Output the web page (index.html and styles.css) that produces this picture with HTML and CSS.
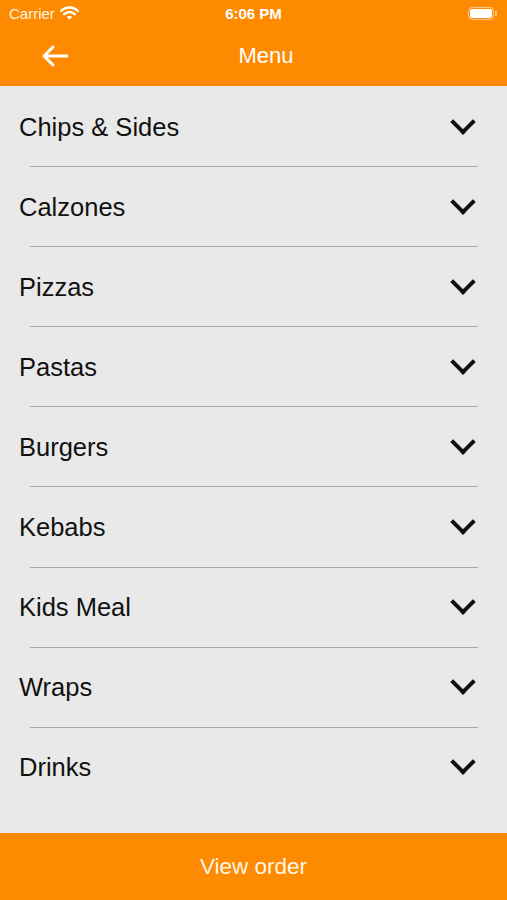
FILE: index.html
```html
<!DOCTYPE html>
<html lang="en">
<head>
    <meta charset="UTF-8">
    <meta name="viewport" content="width=device-width, initial-scale=1.0">
    <title>Menu</title>
    <link rel="stylesheet" href="styles.css">
</head>
<body>
    <div class="app">
        <header class="top-bar">
            <div class="status-bar">
                <div class="carrier">
                    Carrier
                    <svg class="wifi" width="19" height="14" viewBox="0 0 19 14">
                        <path d="M1 5 A12 12 0 0 1 18 5" fill="none" stroke="#fff" stroke-width="2.4" stroke-linecap="round"/>
                        <path d="M4.2 8.2 A7.5 7.5 0 0 1 14.8 8.2" fill="none" stroke="#fff" stroke-width="2.4" stroke-linecap="round"/>
                        <path d="M6.8 11 L9.5 13.6 L12.2 11 A3.8 3.8 0 0 0 6.8 11 Z" fill="#fff"/>
                    </svg>
                </div>
                <div class="clock">6:06 PM</div>
                <div class="battery">
                    <span class="battery-body"><span class="battery-level"></span></span>
                    <span class="battery-tip"></span>
                </div>
            </div>
            <div class="nav-bar">
                <button class="back-button" aria-label="Back">
                    <svg width="28" height="22" viewBox="0 0 28 22">
                        <path d="M26 11 H3 M12 2 L3 11 L12 20" fill="none" stroke="#fff" stroke-width="3" stroke-linecap="round" stroke-linejoin="round"/>
                    </svg>
                </button>
                <h1 class="nav-title">Menu</h1>
            </div>
        </header>

        <ul class="category-list">
            <li class="category">Chips &amp; Sides<span class="chevron"></span></li>
            <li class="category">Calzones<span class="chevron"></span></li>
            <li class="category">Pizzas<span class="chevron"></span></li>
            <li class="category">Pastas<span class="chevron"></span></li>
            <li class="category">Burgers<span class="chevron"></span></li>
            <li class="category">Kebabs<span class="chevron"></span></li>
            <li class="category">Kids Meal<span class="chevron"></span></li>
            <li class="category">Wraps<span class="chevron"></span></li>
            <li class="category last">Drinks<span class="chevron"></span></li>
        </ul>

        <button class="view-order">View order</button>
    </div>
</body>
</html>
```

FILE: styles.css
```css
body {
    margin: 0;
    font-family: "Liberation Sans", Arial, sans-serif;
    background-color: #e9e9e9;
}
.app {
    height: 900px;
    display: flex;
    flex-direction: column;
}
.top-bar {
    background-color: #fd8a00;
    color: white;
}
.status-bar {
    height: 27px;
    display: flex;
    align-items: center;
    justify-content: space-between;
    padding: 0 9px;
    font-size: 15px;
    position: relative;
}
.carrier {
    display: flex;
    align-items: center;
    gap: 5px;
    color: #fff3e0;
}
.wifi {
    margin-top: -2px;
}
.clock {
    position: absolute;
    left: 0;
    right: 0;
    text-align: center;
    font-weight: bold;
    font-size: 15px;
}
.battery {
    display: flex;
    align-items: center;
    margin-right: 1px;
}
.battery-body {
    width: 22px;
    height: 9px;
    border: 1.5px solid rgba(255, 255, 255, 0.55);
    border-radius: 4px;
    padding: 1px;
    display: flex;
}
.battery-level {
    flex: 1;
    background-color: white;
    border-radius: 2px;
}
.battery-tip {
    width: 2px;
    height: 5px;
    margin-left: 1px;
    background-color: rgba(255, 255, 255, 0.55);
    border-radius: 0 1px 1px 0;
}
.nav-bar {
    height: 59px;
    display: flex;
    align-items: center;
    justify-content: center;
    padding-left: 25px;
    position: relative;
}
.back-button {
    position: absolute;
    left: 41px;
    top: 18px;
    background: none;
    border: none;
    padding: 0;
    line-height: 0;
    cursor: pointer;
}
.nav-title {
    margin: 0 0 2px;
    font-size: 22px;
    font-weight: normal;
}
.category-list {
    list-style: none;
    margin: 0;
    padding: 1px 0 0;
    flex: 1;
}
.category {
    height: 80.1px;
    display: flex;
    align-items: center;
    justify-content: space-between;
    padding: 0 35px 0 19px;
    font-size: 25.5px;
    color: #111;
    position: relative;
}
.category::after {
    content: "";
    position: absolute;
    left: 30px;
    right: 29px;
    bottom: 0;
    border-bottom: 1px solid #a8a8a8;
}
.category.last::after {
    display: none;
}
.chevron {
    width: 14px;
    height: 14px;
    border-right: 4px solid #111;
    border-bottom: 4px solid #111;
    transform: rotate(45deg);
    margin-top: -11px;
}
.view-order {
    height: 67px;
    border: none;
    background-color: #fd8a00;
    color: #fff6e6;
    font-family: "Liberation Sans", Arial, sans-serif;
    font-size: 22.5px;
    cursor: pointer;
}
```
